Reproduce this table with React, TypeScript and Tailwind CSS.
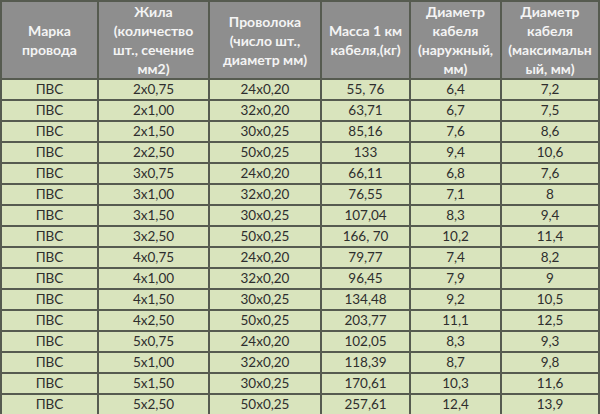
import React from "react";

const headers: string[][] = [
  ["Марка", "провода"],
  ["Жила", "(количество", "шт., сечение", "мм2)"],
  ["Проволока", "(число шт.,", "диаметр мм)"],
  ["Масса 1 км", "кабеля,(кг)"],
  ["Диаметр", "кабеля", "(наружный,", "мм)"],
  ["Диаметр", "кабеля", "(максимальн", "ый, мм)"],
];

const rows: string[][] = [
  ["2x0,75", "24x0,20", "55, 76", "6,4", "7,2"],
  ["2x1,00", "32x0,20", "63,71", "6,7", "7,5"],
  ["2x1,50", "30x0,25", "85,16", "7,6", "8,6"],
  ["2x2,50", "50x0,25", "133", "9,4", "10,6"],
  ["3x0,75", "24x0,20", "66,11", "6,8", "7,6"],
  ["3x1,00", "32x0,20", "76,55", "7,1", "8"],
  ["3x1,50", "30x0,25", "107,04", "8,3", "9,4"],
  ["3x2,50", "50x0,25", "166, 70", "10,2", "11,4"],
  ["4x0,75", "24x0,20", "79,77", "7,4", "8,2"],
  ["4x1,00", "32x0,20", "96,45", "7,9", "9"],
  ["4x1,50", "30x0,25", "134,48", "9,2", "10,5"],
  ["4x2,50", "50x0,25", "203,77", "11,1", "12,5"],
  ["5x0,75", "24x0,20", "102,05", "8,3", "9,3"],
  ["5x1,00", "32x0,20", "118,39", "8,7", "9,8"],
  ["5x1,50", "30x0,25", "170,61", "10,3", "11,6"],
  ["5x2,50", "50x0,25", "257,61", "12,4", "13,9"],
];

export default function App() {
  return (
    <div
      className="w-[600px] h-[414px] overflow-hidden bg-[#565b50] pt-[2px] px-[2px] grid grid-cols-[95px_109px_110px_87px_89px_96px] grid-rows-[76px_repeat(16,1fr)] gap-[2px]"
      style={{ fontFamily: "Lato, 'Noto Sans', sans-serif" }}
    >
      {headers.map((h, i) => (
        <div
          key={"h" + i}
          className="bg-[#8e8e8e] text-[#f4f4f4] font-bold text-[14px] leading-[19px] flex flex-col items-center justify-center text-center"
        >
          {h.map((l, j) => (
            <span key={j} className="whitespace-nowrap">
              {l}
            </span>
          ))}
        </div>
      ))}
      {rows.map((r, i) => (
        <React.Fragment key={"r" + i}>
          <div className="bg-[#d9e4bd] text-[#2e2e2e] text-[13.5px] flex items-center justify-center leading-none">
            ПВС
          </div>
          {r.map((c, j) => (
            <div
              key={j}
              className="bg-[#d9e4bd] text-[#2e2e2e] text-[13.5px] flex items-center justify-center leading-none whitespace-pre"
            >
              {c}
            </div>
          ))}
        </React.Fragment>
      ))}
    </div>
  );
}
